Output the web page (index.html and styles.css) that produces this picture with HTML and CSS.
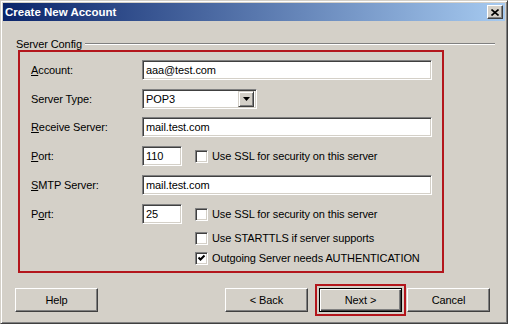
FILE: index.html
```html
<!DOCTYPE html>
<html>
<head>
<meta charset="utf-8">
<title>Create New Account</title>
<link rel="stylesheet" href="styles.css">
</head>
<body>
<div class="window">
	<div class="titlebar">
		<span class="title">Create New Account</span>
		<span class="close-btn">
			<svg width="8" height="7" viewBox="0 0 8 7"><path d="M0.5 0.5L7.5 6.5M7.5 0.5L0.5 6.5" stroke="#000" stroke-width="1.6" fill="none"/></svg>
		</span>
	</div>

	<div class="group-head">
		<span>Server Config</span>
		<span class="group-line"></span>
	</div>

	<div class="config">
		<div class="row">
			<span class="lbl"><u>A</u>ccount:</span>
			<div class="field wide">aaa@test.com</div>
		</div>
		<div class="row r-9">
			<span class="lbl">Server Type:</span>
			<div class="field select">
				<span class="select-val">POP3</span>
				<span class="drop-btn"><svg width="7" height="4" viewBox="0 0 7 4"><path d="M0 0h7L3.5 4z" fill="#000"/></svg></span>
			</div>
		</div>
		<div class="row r-8">
			<span class="lbl"><u>R</u>eceive Server:</span>
			<div class="field wide">mail.test.com</div>
		</div>
		<div class="row r-9">
			<span class="lbl"><u>P</u>ort:</span>
			<div class="field port">110</div>
			<div class="check">
				<span class="box"></span>
				<span>Use SSL for security on this server</span>
			</div>
		</div>
		<div class="row r-9">
			<span class="lbl"><u>S</u>MTP Server:</span>
			<div class="field wide">mail.test.com</div>
		</div>
		<div class="row r-9">
			<span class="lbl">P<u>o</u>rt:</span>
			<div class="field port">25</div>
			<div class="check">
				<span class="box"></span>
				<span>Use SSL for security on this server</span>
			</div>
		</div>
		<div class="row r-4">
			<div class="check indent">
				<span class="box"></span>
				<span>Use STARTTLS if server supports</span>
			</div>
		</div>
		<div class="row">
			<div class="check indent">
				<span class="box"><svg width="9" height="9" viewBox="0 0 9 9"><path d="M1.5 3.5l2 2 4-4" stroke="#000" stroke-width="2" fill="none"/></svg></span>
				<span>Outgoing Server needs AUTHENTICATION</span>
			</div>
		</div>
	</div>

	<div class="buttons">
		<span class="btn">Help</span>
		<span class="btn back">&lt; Back</span>
		<span class="next-wrap"><span class="btn default">Next &gt;</span></span>
		<span class="btn cancel">Cancel</span>
	</div>
</div>
</body>
</html>
```

FILE: styles.css
```css
*,*:before,*:after{
	padding: 0;
	margin: 0;
	box-sizing: border-box;
}
body{
	font-family: "Liberation Sans", Arial, sans-serif;
	font-size: 11px;
	letter-spacing: -0.1px;
	color: #000;
	background: #d4d0c8;
}
.window{
	width: 508px;
	height: 324px;
	padding: 2px;
	border: 1px solid;
	border-color: #d4d0c8 #404040 #404040 #d4d0c8;
	box-shadow: inset 1px 1px #fff, inset -1px -1px #808080;
	background: #d4d0c8;
}
.titlebar{
	height: 18px;
	padding: 0 2px;
	display: flex;
	align-items: center;
	justify-content: space-between;
	background: linear-gradient(to right, #0a246a, #a6caf0);
}
.title{
	color: #fff;
	font-size: 11.5px;
	font-weight: bold;
	letter-spacing: 0;
}
.close-btn{
	width: 16px;
	height: 14px;
	display: flex;
	align-items: center;
	justify-content: center;
	background: #d4d0c8;
	border: 1px solid;
	border-color: #fff #404040 #404040 #fff;
	box-shadow: inset -1px -1px #808080;
}

/* group header */
.group-head{
	height: 13px;
	margin: 16px 10px 0 13px;
	display: flex;
	align-items: center;
	gap: 3px;
}
.group-line{
	flex: 1;
	border-top: 1px solid #808080;
	border-bottom: 1px solid #fff;
}

/* red frame with the form */
.config{
	width: 426px;
	height: 223px;
	margin-left: 15px;
	padding: 8px 0 0 11px;
	border: 2px solid #b3161c;
}
.row{
	height: 20px;
	display: flex;
	align-items: center;
}
.r-9{ margin-top: 9px; }
.r-8{ margin-top: 8px; }
.r-4{ margin-top: 4px; }
.lbl{
	width: 111px;
}
.field{
	height: 20px;
	padding: 0 3px;
	display: flex;
	align-items: center;
	background: #fff;
	border: 1px solid;
	border-color: #808080 #fff #fff #808080;
	box-shadow: inset 1px 1px #404040, inset -1px -1px #d4d0c8;
}
.wide{ width: 290px; }
.port{ width: 40px; }
.select{
	width: 115px;
	padding: 2px 2px 2px 3px;
}
.select-val{ flex: 1; }
.drop-btn{
	width: 16px;
	height: 16px;
	display: flex;
	align-items: center;
	justify-content: center;
	background: #d4d0c8;
	border: 1px solid;
	border-color: #d4d0c8 #404040 #404040 #d4d0c8;
	box-shadow: inset 1px 1px #fff, inset -1px -1px #808080;
}
.check{
	margin-left: 13px;
	display: flex;
	align-items: center;
	gap: 4px;
}
.check.indent{ margin-left: 164px; }
.box{
	width: 13px;
	height: 13px;
	display: flex;
	align-items: center;
	justify-content: center;
	background: #fff;
	border: 1px solid;
	border-color: #808080 #fff #fff #808080;
	box-shadow: inset 1px 1px #404040, inset -1px -1px #d4d0c8;
}

/* bottom buttons */
.buttons{
	margin: 11px 15px 0 12px;
	height: 32px;
	display: flex;
	align-items: center;
}
.btn{
	width: 83px;
	height: 24px;
	display: flex;
	align-items: center;
	justify-content: center;
	border: 1px solid;
	border-color: #fff #404040 #404040 #fff;
	box-shadow: inset -1px -1px #808080;
}
.btn.back{
	margin-left: auto;
	margin-right: 7px;
}
.btn.cancel{ margin-left: 1px; }
.next-wrap{
	padding: 2px;
	border: 2px solid #b3161c;
}
.btn.default{
	border-color: #000;
	box-shadow: inset 1px 1px #fff, inset -1px -1px #404040, inset -2px -2px #808080;
}
```
